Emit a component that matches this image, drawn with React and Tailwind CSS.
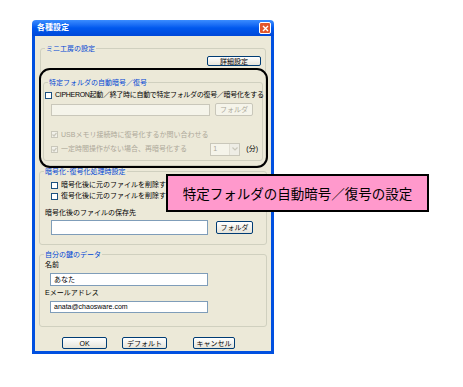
const FONT = { fontFamily: '"Liberation Sans", "Noto Sans CJK JP", sans-serif' };

function Box({ checked, disabled }) {
  return (
    <span
      className={`inline-flex items-center justify-center w-[7px] h-[7px] shrink-0 border ${
        disabled ? "border-[#C9C7BA] bg-[#F2F1EA]" : "border-[#1C5180] bg-white"
      }`}
    >
      {checked ? (
        <svg width="5" height="5" viewBox="0 0 5 5">
          <path d="M0.5 2.5 L2 4 L4.5 1" fill="none" stroke={disabled ? "#C9C7BA" : "#21A121"} strokeWidth="1.2" />
        </svg>
      ) : null}
    </span>
  );
}

function Btn({ label, w, h = 10, disabled }) {
  return (
    <div
      className={`flex items-center justify-center shrink-0 rounded-[2px] border text-[7px] leading-none ${
        disabled
          ? "border-[#C9C7BA] text-[#ACA899] bg-[#F5F4EA]"
          : "border-[#003C74] text-black bg-gradient-to-b from-white to-[#E6E4DA]"
      }`}
      style={{ width: w, height: h }}
    >
      {label}
    </div>
  );
}

function Group({ label, className = "", children }) {
  return (
    <div className={`relative border border-[#D0D0BF] rounded-[3px] ${className}`}>
      <span className="absolute -top-[5px] left-[4px] px-[1px] bg-[#ECE9D8] text-[#0046D5] text-[7px] leading-[9px]">
        {label}
      </span>
      {children}
    </div>
  );
}

export default function App() {
  return (
    <div className="relative w-[463px] h-[387px] bg-white overflow-hidden" style={FONT}>
      <div className="relative ml-[32px] pt-[20px] w-[242px]">
        {/* title bar */}
        <div className="flex items-center justify-between h-[16px] pl-[5px] pr-[3px] rounded-t-[4px] bg-gradient-to-b from-[#3A8CFF] via-[#0058EE] to-[#0048D8]">
          <span className="text-white font-bold text-[8px] leading-none">各種設定</span>
          <div className="flex items-center justify-center w-[12px] h-[12px] rounded-[2px] border border-white bg-[#E2572C]">
            <svg width="7" height="7" viewBox="0 0 7 7">
              <path d="M1 1 L6 6 M6 1 L1 6" stroke="white" strokeWidth="1.4" />
            </svg>
          </div>
        </div>

        {/* body */}
        <div className="flex flex-col bg-[#ECE9D8] border-x-[3px] border-b-[3px] border-[#0050E0] text-[7px] leading-[10px] text-black pb-[2px]">
          <Group label="ミニ工房の設定" className="mt-[12px] ml-[5px] mr-[5px] pb-[4px]">
            <div className="flex justify-end pr-[4px] mt-[7px]">
              <Btn label="詳細設定" w={54} h={10} />
            </div>
            <Group label="特定フォルダの自動暗号／復号" className="mt-[16px] mx-[2px] pb-[4px]">
              <div className="flex items-center gap-[3px] h-[10px] mt-[7px] pl-[1px] tracking-[-0.3px]">
                <Box />
                <span className="whitespace-nowrap">CIPHERON起動／終了時に自動で特定フォルダの復号／暗号化をする</span>
              </div>
              <div className="flex items-center gap-[5px] mt-[3px] pl-[7px] h-[13px]">
                <div className="w-[159px] h-[12px] border border-[#C9C7BA] bg-[#F5F4EA]" />
                <Btn label="フォルダ" w={38} h={13} disabled />
              </div>
              <div className="flex items-center gap-[3px] h-[9px] mt-[14px] pl-[7px] text-[#ACA899]">
                <Box checked disabled />
                <span>USBメモリ接続時に復号化するか問い合わせる</span>
              </div>
              <div className="flex items-center h-[14px] mt-[3px] pl-[7px] text-[#ACA899]">
                <Box checked disabled />
                <span className="ml-[3px]">一定時間操作がない場合、再暗号化する</span>
                <div className="ml-auto flex items-center w-[30px] h-[13px] border border-[#C9C7BA] bg-[#F5F4EA]">
                  <span className="pl-[2px] flex-1">1</span>
                  <div className="flex items-center justify-center w-[10px] h-full bg-[#EEEDE5] border-l border-[#E0DED3]">
                    <svg width="6" height="4" viewBox="0 0 6 4">
                      <path d="M0.5 0.5 L3 3 L5.5 0.5" fill="none" stroke="#C9C7BA" strokeWidth="1.2" />
                    </svg>
                  </div>
                </div>
                <span className="ml-[6px] mr-[4px] text-black">(分)</span>
              </div>
            </Group>
          </Group>

          <Group label="暗号化･復号化処理時設定" className="mt-[5px] mx-[4px] pb-[9px]">
            <div className="flex items-center gap-[3px] h-[10px] mt-[8px] pl-[11px]">
              <Box />
              <span>暗号化後に元のファイルを削除する</span>
            </div>
            <div className="flex items-center gap-[3px] h-[10px] mt-[1px] pl-[11px]">
              <Box />
              <span>復号化後に元のファイルを削除する</span>
            </div>
            <div className="h-[10px] mt-[7px] pl-[5px]">暗号化後のファイルの保存先</div>
            <div className="flex items-center gap-[8px] mt-[2px] pl-[11px] h-[15px]">
              <div className="w-[157px] h-[15px] border border-[#7F9DB9] bg-white" />
              <Btn label="フォルダ" w={37} h={13} />
            </div>
          </Group>

          <Group label="自分の鍵のデータ" className="mt-[9px] mx-[4px] pb-[13px]">
            <div className="h-[10px] mt-[5px] pl-[5px]">名前</div>
            <div className="mt-[3px] ml-[10px] w-[158px] h-[13px] border border-[#7F9DB9] bg-white pl-[3px] leading-[11px]">
              あなた
            </div>
            <div className="h-[10px] mt-[2px] pl-[5px]">Eメールアドレス</div>
            <div className="mt-[3px] ml-[10px] w-[158px] h-[12px] border border-[#7F9DB9] bg-white pl-[3px] leading-[10px]">
              anata@chaosware.com
            </div>
          </Group>

          <div className="flex items-center mt-[10px] pl-[27px] h-[12px]">
            <Btn label="OK" w={45} h={12} />
            <div className="ml-[15px]">
              <Btn label="デフォルト" w={45} h={12} />
            </div>
            <div className="ml-[26px]">
              <Btn label="キャンセル" w={42} h={12} />
            </div>
          </div>
        </div>

        {/* annotation outline */}
        <div className="absolute left-[7px] top-[68px] w-[229px] h-[100px] border-2 border-black rounded-[11px]" />
      </div>

      {/* callout */}
      <div className="absolute left-[166px] top-[174px] w-[263px] h-[38px] flex items-center justify-center border-2 border-black bg-[#FF99CC]">
        <span className="text-[13.5px] text-black" style={{ fontFamily: '"Noto Sans CJK JP", sans-serif' }}>
          特定フォルダの自動暗号／復号の設定
        </span>
      </div>
    </div>
  );
}
